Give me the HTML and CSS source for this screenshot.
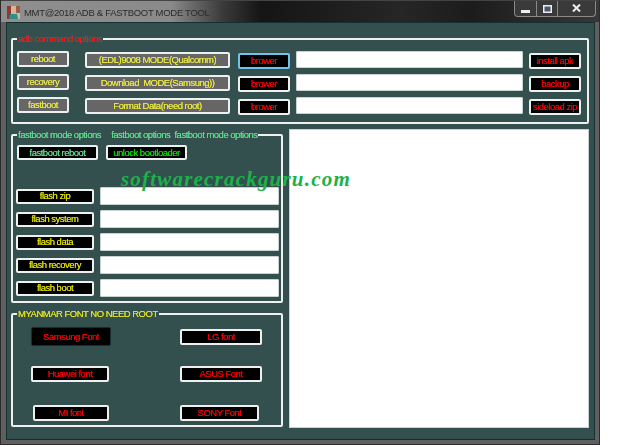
FILE: index.html
```html
<!DOCTYPE html>
<html lang="en">
<head>
    <meta charset="UTF-8">
    <title>MMT@2018 ADB &amp; FASTBOOT MODE TOOL</title>
    <link rel="stylesheet" href="styles.css">
</head>
<body>
    <div class="window">
        <div class="titlebar">
            <svg class="app-icon" width="13" height="13" viewBox="0 0 13 13">
                <rect width="13" height="13" fill="#c9b7a8"/>
                <rect x="0" y="0" width="4" height="13" fill="#8c3a30"/>
                <rect x="9" y="0" width="4" height="7" fill="#9a5b4a"/>
                <circle cx="6.5" cy="4" r="2.6" fill="#e2b48f"/>
                <path d="M2 13 L3 8 L10 8 L11 13 Z" fill="#2f8f8c"/>
            </svg>
            <span class="title">MMT@2018 ADB &amp; FASTBOOT MODE TOOL</span>
            <div class="caption-btns">
                <div class="cap cap-min"><svg width="9" height="4" viewBox="0 0 9 4"><rect width="9" height="3" y="1" fill="#eee"/></svg></div>
                <div class="cap cap-max"><svg width="9" height="8" viewBox="0 0 9 8"><rect x="0.75" y="0.75" width="7.5" height="6.5" fill="#46586e" stroke="#eee" stroke-width="1.5"/></svg></div>
                <div class="cap cap-close"><svg width="9" height="8" viewBox="0 0 9 8"><path d="M1 0.5 L8 7.5 M8 0.5 L1 7.5" stroke="#eee" stroke-width="2"/></svg></div>
            </div>
        </div>

        <div class="client">
            <div class="group adb">
                <span class="legend red">adb command options</span>
                <div class="adb-row">
                    <button class="btn gray small">reboot</button>
                    <button class="btn gray wide">(EDL)9008 MODE(Qualcomm)</button>
                    <button class="btn dark small focus">brower</button>
                    <input class="field" type="text">
                    <button class="btn dark small">install apk</button>
                </div>
                <div class="adb-row">
                    <button class="btn gray small">recovery</button>
                    <button class="btn gray wide">Download &nbsp;MODE(Samsung))</button>
                    <button class="btn dark small">brower</button>
                    <input class="field" type="text">
                    <button class="btn dark small">backup</button>
                </div>
                <div class="adb-row">
                    <button class="btn gray small">fastboot</button>
                    <button class="btn gray wide">Format Data(need root)</button>
                    <button class="btn dark small">brower</button>
                    <input class="field" type="text">
                    <button class="btn dark small">sideload zip</button>
                </div>
            </div>

            <div class="lower">
                <div class="left-col">
                    <div class="group fastboot">
                        <span class="legend green-soft">fastboot mode options <span class="gap"></span>fastboot options&nbsp; fastboot mode options</span>
                        <div class="fb-top">
                            <button class="btn black fb-btn green-soft">fastboot reboot</button>
                            <button class="btn black fb-btn green">unlock bootloader</button>
                        </div>
                        <div class="flash-row"><button class="btn black flash">flash zip</button><input class="field" type="text"></div>
                        <div class="flash-row"><button class="btn black flash">flash system</button><input class="field" type="text"></div>
                        <div class="flash-row"><button class="btn black flash">flash data</button><input class="field" type="text"></div>
                        <div class="flash-row"><button class="btn black flash">flash recovery</button><input class="field" type="text"></div>
                        <div class="flash-row"><button class="btn black flash">flash boot</button><input class="field" type="text"></div>
                    </div>

                    <div class="group fonts">
                        <span class="legend yellow">MYANMAR FONT NO NEED ROOT</span>
                        <div class="font-grid">
                            <button class="btn black font-btn samsung">Samsung Font</button>
                            <button class="btn black font-btn lg">LG font</button>
                            <button class="btn black font-btn huawei">Huawei font</button>
                            <button class="btn black font-btn">ASUS Font</button>
                            <button class="btn black font-btn mi">MI font</button>
                            <button class="btn black font-btn sony">SONY Font</button>
                        </div>
                    </div>
                </div>
                <textarea class="output"></textarea>
            </div>
        </div>

        <div class="watermark">softwarecrackguru.com</div>
    </div>
</body>
</html>
```

FILE: styles.css
```css
body {
    margin: 0;
    background-color: #ffffff;
    font-family: "Liberation Sans", Arial, sans-serif;
    font-size: 9.5px;
}

.window {
    position: relative;
    width: 600px;
    height: 445px;
    box-sizing: border-box;
    padding: 0 4px 4px 5px;
    background-color: #5f5f5f;
    border-right: 1px solid #2c2c2c;
    border-bottom: 1px solid #2c2c2c;
    border-left: 1px solid #2c2c2c;
}

.titlebar {
    display: flex;
    align-items: flex-start;
    height: 22px;
    margin: 0 -4px 0 -5px;
    padding-left: 6px;
    background: linear-gradient(90deg, #8f8f8f 0, #8a8a8a 170px, #3a3a3a 222px, #151515 260px, #262626 400px, #1c1c1c 470px, #383838 600px);
    border-top: 1px solid #444;
    box-sizing: border-box;
}

.app-icon {
    margin-top: 5px;
}

.title {
    margin: 5px 0 0 4px;
    font-size: 9.5px;
    letter-spacing: -0.3px;
    line-height: 13px;
    color: #2b2b2b;
    white-space: nowrap;
    filter: blur(0.3px);
}

.caption-btns {
    display: flex;
    margin-left: auto;
    margin-right: 3px;
    height: 15px;
    border: 1px solid #8a8a8a;
    border-top: none;
    border-radius: 0 0 4px 4px;
    background-color: #3a3a3a;
}

.cap {
    display: flex;
    align-items: center;
    justify-content: center;
    height: 15px;
    border-right: 1px solid #8a8a8a;
}

.cap-min { width: 21px; }
.cap-min svg { margin-top: 4px; }
.cap-max { width: 20px; }
.cap-close { width: 37px; border-right: none; }
.cap-close svg { margin-bottom: 2px; }

.client {
    display: flex;
    flex-direction: column;
    height: 418px;
    box-sizing: border-box;
    padding: 15px 5px 0 4px;
    background-color: #33504f;
    border: 1px solid #16302f;
    filter: blur(0.2px);
}

.group {
    position: relative;
    box-sizing: border-box;
    border: 2px solid #eef0f0;
    border-radius: 2px;
}

.legend {
    position: absolute;
    top: -7px;
    left: 4px;
    padding: 0 1px 0 1px;
    background-color: #33504f;
    font-size: 9.5px;
    letter-spacing: -0.5px;
    line-height: 12px;
    white-space: nowrap;
    text-shadow: 0 0 0.6px currentColor;
}

.red { color: #ee1c1c; }
.green-soft { color: #5fd98a; }
.green { color: #00dd00; }
.yellow { color: #e0e020; }

.gap {
    display: inline-block;
    width: 8px;
}

.btn {
    box-sizing: border-box;
    margin: 0;
    padding: 0;
    border: 2px solid #eef0f0;
    border-radius: 2px;
    font-family: "Liberation Sans", Arial, sans-serif;
    font-size: 9.5px;
    letter-spacing: -0.5px;
    line-height: 1;
    white-space: nowrap;
    text-shadow: 0 0 0.6px currentColor;
}

.gray {
    background-color: #666666;
    color: #e6e640;
}

.dark {
    background-color: #000000;
    color: #ee0000;
}

.black {
    background-color: #000000;
    color: #dddd00;
}

.focus {
    border-color: #6fc3ea;
}

.adb {
    height: 86px;
    padding: 11px 6px 0 4px;
}

.adb-row {
    display: flex;
    align-items: flex-start;
    height: 23px;
}

.btn.small {
    width: 52px;
    height: 16px;
}

.btn.wide {
    width: 145px;
    height: 16px;
    margin: 1px 8px 0 16px;
}

.btn.dark {
    margin-top: 2px;
}

.field {
    box-sizing: border-box;
    margin: 0;
    padding: 0;
    border: 1px solid #c9d2d2;
    border-radius: 1px;
    background-color: #ffffff;
}

.adb .field {
    width: 227px;
    height: 17px;
    margin: 0 6px;
}

.lower {
    display: flex;
    flex: 1;
    margin-top: 5px;
    gap: 6px;
}

.left-col {
    display: flex;
    flex-direction: column;
    width: 272px;
    padding-top: 5px;
    gap: 10px;
}

.fastboot {
    height: 169px;
    padding: 9px 2px 0 3px;
}

.fb-top {
    display: flex;
    gap: 8px;
    margin: 0 0 27px 1px;
}

.fb-btn {
    width: 81px;
    height: 15px;
}

.fb-btn.green-soft { color: #5fd98a; }
.fb-btn.green { color: #00dd00; }

.flash-row {
    display: flex;
    align-items: center;
    gap: 6px;
    height: 18px;
    margin-bottom: 5px;
}

.flash {
    width: 78px;
    height: 15px;
}

.flash-row .field {
    flex: 1;
    height: 18px;
}

.fonts {
    height: 114px;
}

.font-grid {
    display: grid;
    grid-template-columns: 149px 82px;
    grid-template-rows: 39px 39px 20px;
    padding: 12px 0 0 18px;
}

.font-btn {
    width: 82px;
    height: 16px;
    color: #ee0000;
    align-self: start;
}

.samsung {
    width: 80px;
    height: 19px;
    border-color: #16302f;
    border-width: 1px;
}

.lg { margin-top: 2px; }
.huawei { width: 78px; }
.mi { width: 76px; margin-left: 2px; }
.sony { width: 79px; }

.output {
    box-sizing: border-box;
    width: 300px;
    height: 299px;
    margin: 0;
    padding: 0;
    border: 1px solid #c9d2d2;
    background-color: #ffffff;
    resize: none;
}

.watermark {
    position: absolute;
    top: 167px;
    left: 120px;
    font-family: "Liberation Serif", "Times New Roman", serif;
    font-style: italic;
    font-weight: bold;
    font-size: 21px;
    letter-spacing: 1.2px;
    color: #1db14a;
    white-space: nowrap;
}
```
